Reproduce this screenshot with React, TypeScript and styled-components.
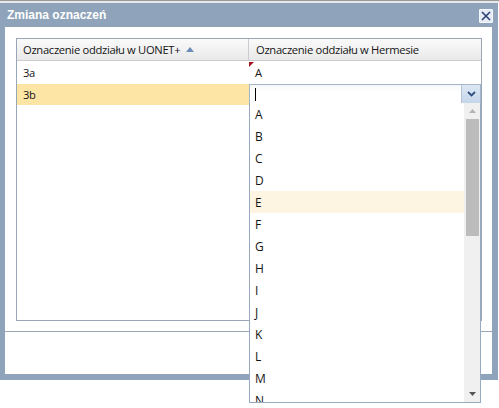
import React from 'react';
import styled, { createGlobalStyle } from 'styled-components';

const GlobalStyle = createGlobalStyle`
  html, body {
    margin: 0;
    padding: 0;
    background: #ffffff;
  }
  body {
    font-family: 'Open Sans', 'Liberation Sans', sans-serif;
    font-size: 11.2px;
    letter-spacing: -0.3px;
    color: #151515;
  }
`;

const Page = styled.div`
  width: 499px;
  height: 408px;
  overflow: hidden;
  background: #ffffff;
`;

const TopStrip = styled.div`
  height: 3px;
  background: #e6e8ea;
  border-top: 1px solid #9a9a9a;
  box-sizing: border-box;
`;

const Window = styled.div`
  width: 498px;
  display: flex;
  flex-direction: column;
  background: #8fa4ba;
  padding: 0 6px 6px 5px;
  box-sizing: border-box;
`;

const TitleBar = styled.div`
  height: 24px;
  display: flex;
  align-items: center;
  justify-content: space-between;
  padding: 0 0 0 2px;
`;

const Title = styled.span`
  font-family: 'Liberation Sans', Arial, sans-serif;
  font-weight: bold;
  font-size: 12px;
  letter-spacing: 0;
  color: #ffffff;
`;

const CloseButton = styled.button`
  width: 14px;
  height: 14px;
  margin-right: -1px;
  margin-top: 2px;
  padding: 0;
  border: 1px solid #f4f7fb;
  background: #e4ebf4;
  display: flex;
  align-items: center;
  justify-content: center;
  border-radius: 1px;
`;

const Content = styled.div`
  background: #ffffff;
  display: flex;
  flex-direction: column;
`;

const Body = styled.div`
  padding: 11px 10px 10px 11px;
  border-bottom: 1px solid #98a6b6;
`;

const Grid = styled.div`
  height: 283px;
  border: 1px solid #98a6b6;
  box-sizing: border-box;
  display: flex;
  flex-direction: column;
`;

const HeaderRow = styled.div`
  height: 21px;
  display: grid;
  grid-template-columns: 232px 1fr;
  background: linear-gradient(#fafafa, #e9e9e9);
  border-bottom: 1px solid #c9cdd2;
`;

const HeaderCell = styled.div<{ $last?: boolean }>`
  display: flex;
  align-items: center;
  gap: 6px;
  padding-left: ${p => (p.$last ? '7px' : '6px')};
  border-right: ${p => (p.$last ? 'none' : '1px solid #c9cdd2')};
`;

const Row = styled.div<{ $selected?: boolean }>`
  height: 21px;
  display: grid;
  grid-template-columns: 232px 1fr;
  border-top: 1px solid ${p => (p.$selected ? '#ffffff' : 'transparent')};
`;

const Cell = styled.div<{ $selected?: boolean; $dirty?: boolean }>`
  position: relative;
  display: flex;
  align-items: center;
  padding-left: 6px;
  background: ${p => (p.$selected ? '#fde5a6' : 'transparent')};
  ${p =>
    p.$dirty &&
    `&::before {
      content: '';
      position: absolute;
      left: 0;
      top: 0;
      border-top: 5px solid #a3141c;
      border-right: 5px solid transparent;
    }`}
`;

const EditorCell = styled.div`
  position: relative;
`;

const Input = styled.div`
  height: 20px;
  box-sizing: border-box;
  border: 1px solid #a5b6ca;
  background: linear-gradient(#f4f7fa, #ffffff 40%);
  display: flex;
  align-items: center;
  position: relative;
  z-index: 2;
`;

const Caret = styled.span`
  width: 1px;
  height: 13px;
  background: #000;
  margin-left: 5px;
`;

const Spacer = styled.span`
  flex: 1;
`;

const ArrowButton = styled.span`
  width: 18px;
  height: 18px;
  background: linear-gradient(#dde8f4, #c5d6ea);
  border-left: 1px solid #b4c4d6;
  display: flex;
  align-items: center;
  justify-content: center;
`;

const List = styled.div`
  position: absolute;
  left: 0;
  right: 0;
  top: 19px;
  height: 300px;
  box-sizing: border-box;
  border: 1px solid #98aac0;
  border-top: none;
  background: #ffffff;
  display: flex;
  z-index: 3;
  overflow: hidden;
`;

const Items = styled.div`
  flex: 1;
  display: flex;
  flex-direction: column;
`;

const Item = styled.div<{ $hover?: boolean }>`
  height: 22px;
  flex: 0 0 22px;
  display: flex;
  align-items: center;
  padding-left: 5px;
  font-size: 12px;
  background: ${p => (p.$hover ? '#fdf5e2' : 'transparent')};
`;

const Scrollbar = styled.div`
  width: 16px;
  background: #f0f0f0;
  display: flex;
  flex-direction: column;
  align-items: center;
`;

const ScrollArrow = styled.div`
  height: 16px;
  display: flex;
  align-items: center;
  justify-content: center;
`;

const Thumb = styled.div`
  width: 13px;
  height: 117px;
  background: #bcbcbc;
`;

const Track = styled.div`
  flex: 1;
`;

const Footer = styled.div`
  height: 42px;
`;

const letters = ['A', 'B', 'C', 'D', 'E', 'F', 'G', 'H', 'I', 'J', 'K', 'L', 'M', 'N'];

const App: React.FC = () => {
  return (
    <Page>
      <GlobalStyle />
      <TopStrip />
      <Window>
        <TitleBar>
          <Title>Zmiana oznaczeń</Title>
          <CloseButton>
            <svg width="10" height="10" viewBox="0 0 10 10">
              <path d="M1 1 L9 9 M9 1 L1 9" stroke="#2d3f73" strokeWidth="1.6" />
            </svg>
          </CloseButton>
        </TitleBar>
        <Content>
          <Body>
            <Grid>
              <HeaderRow>
                <HeaderCell>
                  Oznaczenie oddziału w UONET+
                  <svg width="8" height="5" viewBox="0 0 8 5">
                    <path d="M0 5 L4 0 L8 5 Z" fill="#6a8cb8" />
                  </svg>
                </HeaderCell>
                <HeaderCell $last>Oznaczenie oddziału w Hermesie</HeaderCell>
              </HeaderRow>
              <Row>
                <Cell>3a</Cell>
                <Cell $dirty>A</Cell>
              </Row>
              <Row $selected>
                <Cell $selected>3b</Cell>
                <EditorCell>
                  <Input>
                    <Caret />
                    <Spacer />
                    <ArrowButton>
                      <svg width="9" height="6" viewBox="0 0 9 6">
                        <path d="M1 1 L4.5 4.5 L8 1" stroke="#2f4e7e" strokeWidth="1.8" fill="none" />
                      </svg>
                    </ArrowButton>
                  </Input>
                  <List>
                    <Items>
                      {letters.map(l => (
                        <Item key={l} $hover={l === 'E'}>
                          {l}
                        </Item>
                      ))}
                    </Items>
                    <Scrollbar>
                      <ScrollArrow>
                        <svg width="7" height="4" viewBox="0 0 7 4">
                          <path d="M0 4 L3.5 0 L7 4 Z" fill="#b5b5b5" />
                        </svg>
                      </ScrollArrow>
                      <Thumb />
                      <Track />
                      <ScrollArrow>
                        <svg width="7" height="4" viewBox="0 0 7 4">
                          <path d="M0 0 L3.5 4 L7 0 Z" fill="#555" />
                        </svg>
                      </ScrollArrow>
                    </Scrollbar>
                  </List>
                </EditorCell>
              </Row>
            </Grid>
          </Body>
          <Footer />
        </Content>
      </Window>
    </Page>
  );
};

export default App;
